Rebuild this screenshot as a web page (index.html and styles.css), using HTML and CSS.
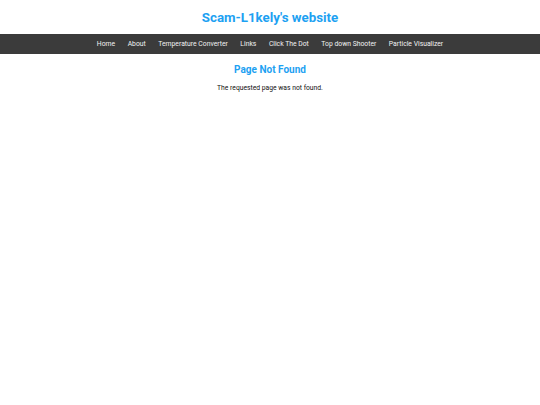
FILE: index.html
```html
<!DOCTYPE html>
<html>
<head>
<meta charset="utf-8">
<link rel="stylesheet" href="styles.css">
</head>
<body>
<header class="site-header">
  <h1 class="site-title">Scam-L1kely's website</h1>
</header>
<nav class="nav">
  <a href="#">Home</a>
  <a href="#">About</a>
  <a href="#">Temperature Converter</a>
  <a href="#">Links</a>
  <a href="#">Click The Dot</a>
  <a href="#">Top down Shooter</a>
  <a href="#">Particle Visualizer</a>
</nav>
<main class="content">
  <h2 class="page-title">Page Not Found</h2>
  <p class="message">The requested page was not found.</p>
</main>
</body>
</html>
```
FILE: styles.css
```css
html, body {
  margin: 0;
  padding: 0;
  background: #ffffff;
  font-family: Roboto, "Liberation Sans", sans-serif;
}
.site-header {
  height: 34px;
  display: flex;
  align-items: center;
  justify-content: center;
}
.site-title {
  margin: 0;
  font-size: 13.3px;
  font-weight: 700;
  color: #1da1f2;
}
.nav {
  height: 20px;
  background: #3b3b3b;
  display: flex;
  align-items: center;
  justify-content: center;
  gap: 12.5px;
}
.nav a {
  color: #f2f2f2;
  text-decoration: none;
  font-size: 6.8px;
  font-weight: 400;
}
.content {
  text-align: center;
  padding-top: 10px;
}
.page-title {
  margin: 0;
  font-size: 10px;
  font-weight: 700;
  color: #1da1f2;
}
.message {
  margin: 9px 0 0;
  font-size: 6.75px;
  color: #111;
}
```
